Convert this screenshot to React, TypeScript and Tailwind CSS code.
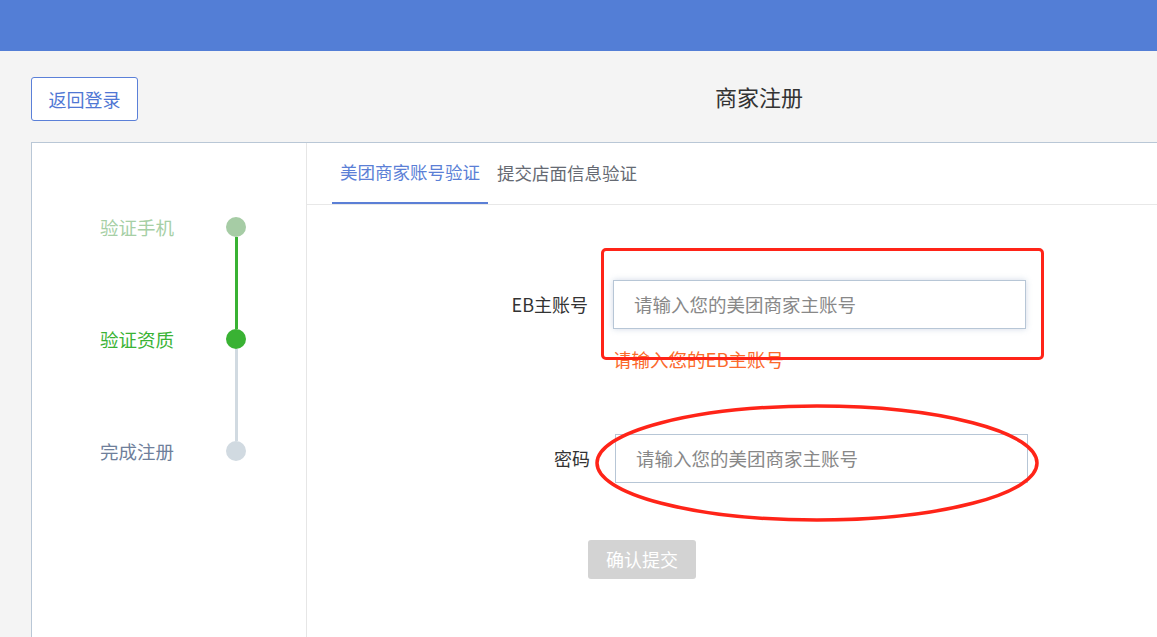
import React from "react";

const font = { fontFamily: '"Noto Sans CJK SC", "Noto Sans", sans-serif' };

function Steps() {
  return (
    <div className="w-[275px] shrink-0 border-r border-[#e6e6e6] pl-[68px] pt-[74px]">
      <div className="grid grid-cols-[126px_20px]">
        <div className="flex h-[20px] items-center text-[18.5px] leading-none text-[#a6cfa5]">验证手机</div>
        <div className="h-[20px] w-[20px] rounded-full bg-[#a6cca5]" />
        <div className="h-[92px]" />
        <div className="flex h-[92px] justify-center">
          <div className="h-full w-[3px] bg-[#39b233]" />
        </div>
        <div className="flex h-[20px] items-center text-[18.5px] leading-none text-[#3ab335]">验证资质</div>
        <div className="h-[20px] w-[20px] rounded-full bg-[#39b233]" />
        <div className="h-[92px]" />
        <div className="flex h-[92px] justify-center">
          <div className="h-full w-[3px] bg-[#d1dae1]" />
        </div>
        <div className="flex h-[20px] items-center text-[18.5px] leading-none text-[#6f7f9b]">完成注册</div>
        <div className="h-[20px] w-[20px] rounded-full bg-[#d1dae1]" />
      </div>
    </div>
  );
}

function Tabs() {
  return (
    <div className="flex h-[62px] border-b border-[#e8e8e8] pl-[25px]">
      <div className="flex h-full items-center border-b-2 border-[#5b7fd6] px-[8px] text-[17.5px] text-[#5b7fd6]">
        美团商家账号验证
      </div>
      <div className="flex h-full items-center px-[9px] text-[17.5px] text-[#666a73]">
        提交店面信息验证
      </div>
    </div>
  );
}

function Form() {
  return (
    <div className="relative pt-[75px]">
      <div className="flex items-center gap-[25px]">
        <div className="w-[281px] text-right text-[18px] text-[#333]">EB主账号</div>
        <div className="flex h-[49px] w-[413px] items-center border border-[#b7c6d6] bg-white pl-[20px] text-[18.5px] text-[#888] shadow-[0_0_6px_rgba(150,170,200,0.45)]">
          请输入您的美团商家主账号
        </div>
      </div>
      <div className="ml-[306px] mt-[19px] h-[22px] text-[18.5px] leading-[22px] text-[#fb6a2c]">
        请输入您的EB主账号
      </div>
      <div className="mt-[64px] flex items-center gap-[25px]">
        <div className="w-[283px] text-right text-[18px] text-[#333]">密码</div>
        <div className="flex h-[49px] w-[413px] items-center border border-[#b7c6d6] bg-white pl-[20px] text-[18.5px] text-[#888]">
          请输入您的美团商家主账号
        </div>
      </div>
      <div className="ml-[281px] mt-[57px] flex h-[39px] w-[108px] items-center justify-center rounded-[3px] bg-[#d3d3d3] text-[18px] text-white">
        确认提交
      </div>
    </div>
  );
}

export default function App() {
  return (
    <div className="relative h-[637px] w-[1157px] overflow-hidden bg-[#f4f4f4]" style={font}>
      <div className="h-[51px] bg-[#537ed6]" />
      <div className="flex items-center pl-[31px] pt-[26px]">
        <div className="flex h-[44px] w-[107px] items-center justify-center rounded-[3px] border border-[#5b80d8] bg-white text-[18px] text-[#5077d4]">
          返回登录
        </div>
        <div className="ml-[577px] pb-[6px] text-[22px] text-[#333]">商家注册</div>
      </div>
      <div className="ml-[31px] mt-[21px] flex h-[600px] w-[1500px] border-l border-t border-[#b9c7d6] bg-white">
        <Steps />
        <div className="flex-1">
          <Tabs />
          <Form />
        </div>
      </div>
      <div className="pointer-events-none absolute left-[601px] top-[248px] h-[112px] w-[443px] rounded-[5px] border-[3.5px] border-[#ff2418]" />
      <svg className="pointer-events-none absolute left-0 top-0" width="1157" height="637">
        <ellipse cx="817" cy="463" rx="220" ry="57" fill="none" stroke="#ff2418" strokeWidth="3.5" />
      </svg>
    </div>
  );
}
